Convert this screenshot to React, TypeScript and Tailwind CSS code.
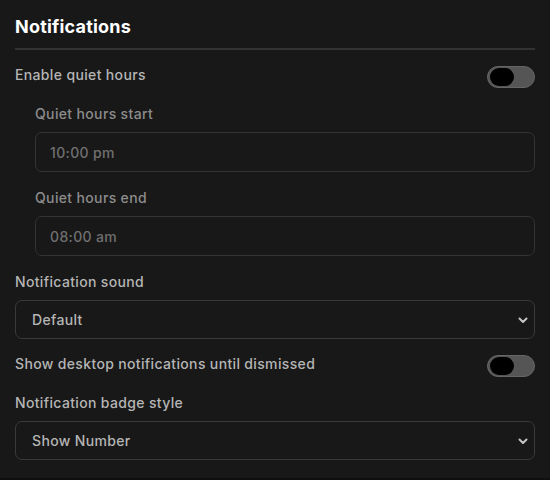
import { useState } from "react";

function Toggle({ on, onChange }: { on: boolean; onChange: (v: boolean) => void }) {
  return (
    <button
      type="button"
      onClick={() => onChange(!on)}
      className={
        "relative w-[48px] h-[22px] rounded-full border border-[#666] flex items-center px-[2px] shrink-0 " +
        (on ? "bg-[#4f8cff] justify-end" : "bg-[#555] justify-start")
      }
    >
      <span className="block w-[24px] h-[18px] rounded-full bg-black" />
    </button>
  );
}

function Chevron() {
  return (
    <svg
      className="absolute right-[6px] top-1/2 -translate-y-1/2 pointer-events-none"
      width="12"
      height="12"
      viewBox="0 0 12 12"
      fill="none"
    >
      <path d="M2.5 4.5 6 8l3.5-3.5" stroke="#c4c4c4" strokeWidth="2" strokeLinecap="round" strokeLinejoin="round" />
    </svg>
  );
}

function Select({ value, options }: { value: string; options: string[] }) {
  const [v, setV] = useState(value);
  return (
    <div className="relative">
      <select
        value={v}
        onChange={(e) => setV(e.target.value)}
        className="appearance-none w-full h-[39px] rounded-[7px] border border-[#3a3a3a] bg-[#181818] pl-[16px] text-[14px] font-medium tracking-[0.35px] text-[#b5b5b5] outline-none"
      >
        {options.map((o) => (
          <option key={o}>{o}</option>
        ))}
      </select>
      <Chevron />
    </div>
  );
}

function TimeInput({ value }: { value: string }) {
  return (
    <div className="h-[40px] rounded-[7px] border border-[#333] flex items-center pl-[14px] text-[14px] font-medium tracking-[0.35px] text-[#707070]">
      {value}
    </div>
  );
}

export default function App() {
  const [quiet, setQuiet] = useState(false);
  const [desktop, setDesktop] = useState(false);

  return (
    <div className="min-h-screen bg-[#0f0f0f]" style={{ fontFamily: "Inter, 'Noto Sans', sans-serif" }}>
      <div className="bg-[#181818] px-[15px] pt-[13px] pb-[18px]">
        <h1 className="text-[18px] leading-[28px] font-bold tracking-[0.2px] text-white pb-[7px] border-b-2 border-[#333]">
          Notifications
        </h1>

        <div className="mt-[16px] flex flex-col gap-4">
          <div className="flex items-center justify-between h-[22px]">
            <span className="text-[14px] leading-[20px] mb-[4px] font-medium tracking-[0.35px] text-[#b5b5b5]">Enable quiet hours</span>
            <Toggle on={quiet} onChange={setQuiet} />
          </div>

          <div className="pl-5 flex flex-col gap-4">
            <div className="flex flex-col gap-2">
              <label className="text-[14px] leading-[20px] font-medium tracking-[0.35px] text-[#8c8c8c]">Quiet hours start</label>
              <TimeInput value="10:00 pm" />
            </div>
            <div className="flex flex-col gap-2">
              <label className="text-[14px] leading-[20px] font-medium tracking-[0.35px] text-[#8c8c8c]">Quiet hours end</label>
              <TimeInput value="08:00 am" />
            </div>
          </div>

          <div className="flex flex-col gap-2">
            <label className="text-[14px] leading-[20px] font-medium tracking-[0.35px] text-[#b5b5b5]">Notification sound</label>
            <Select value="Default" options={["Default", "Chime", "Bell", "None"]} />
          </div>

          <div className="flex items-center justify-between h-[22px]">
            <span className="text-[14px] leading-[20px] mb-[4px] font-medium tracking-[0.35px] text-[#b5b5b5]">Show desktop notifications until dismissed</span>
            <Toggle on={desktop} onChange={setDesktop} />
          </div>

          <div className="flex flex-col gap-2">
            <label className="text-[14px] leading-[20px] font-medium tracking-[0.35px] text-[#b5b5b5]">Notification badge style</label>
            <Select value="Show Number" options={["Show Number", "Show Dot", "Hidden"]} />
          </div>
        </div>
      </div>
    </div>
  );
}
